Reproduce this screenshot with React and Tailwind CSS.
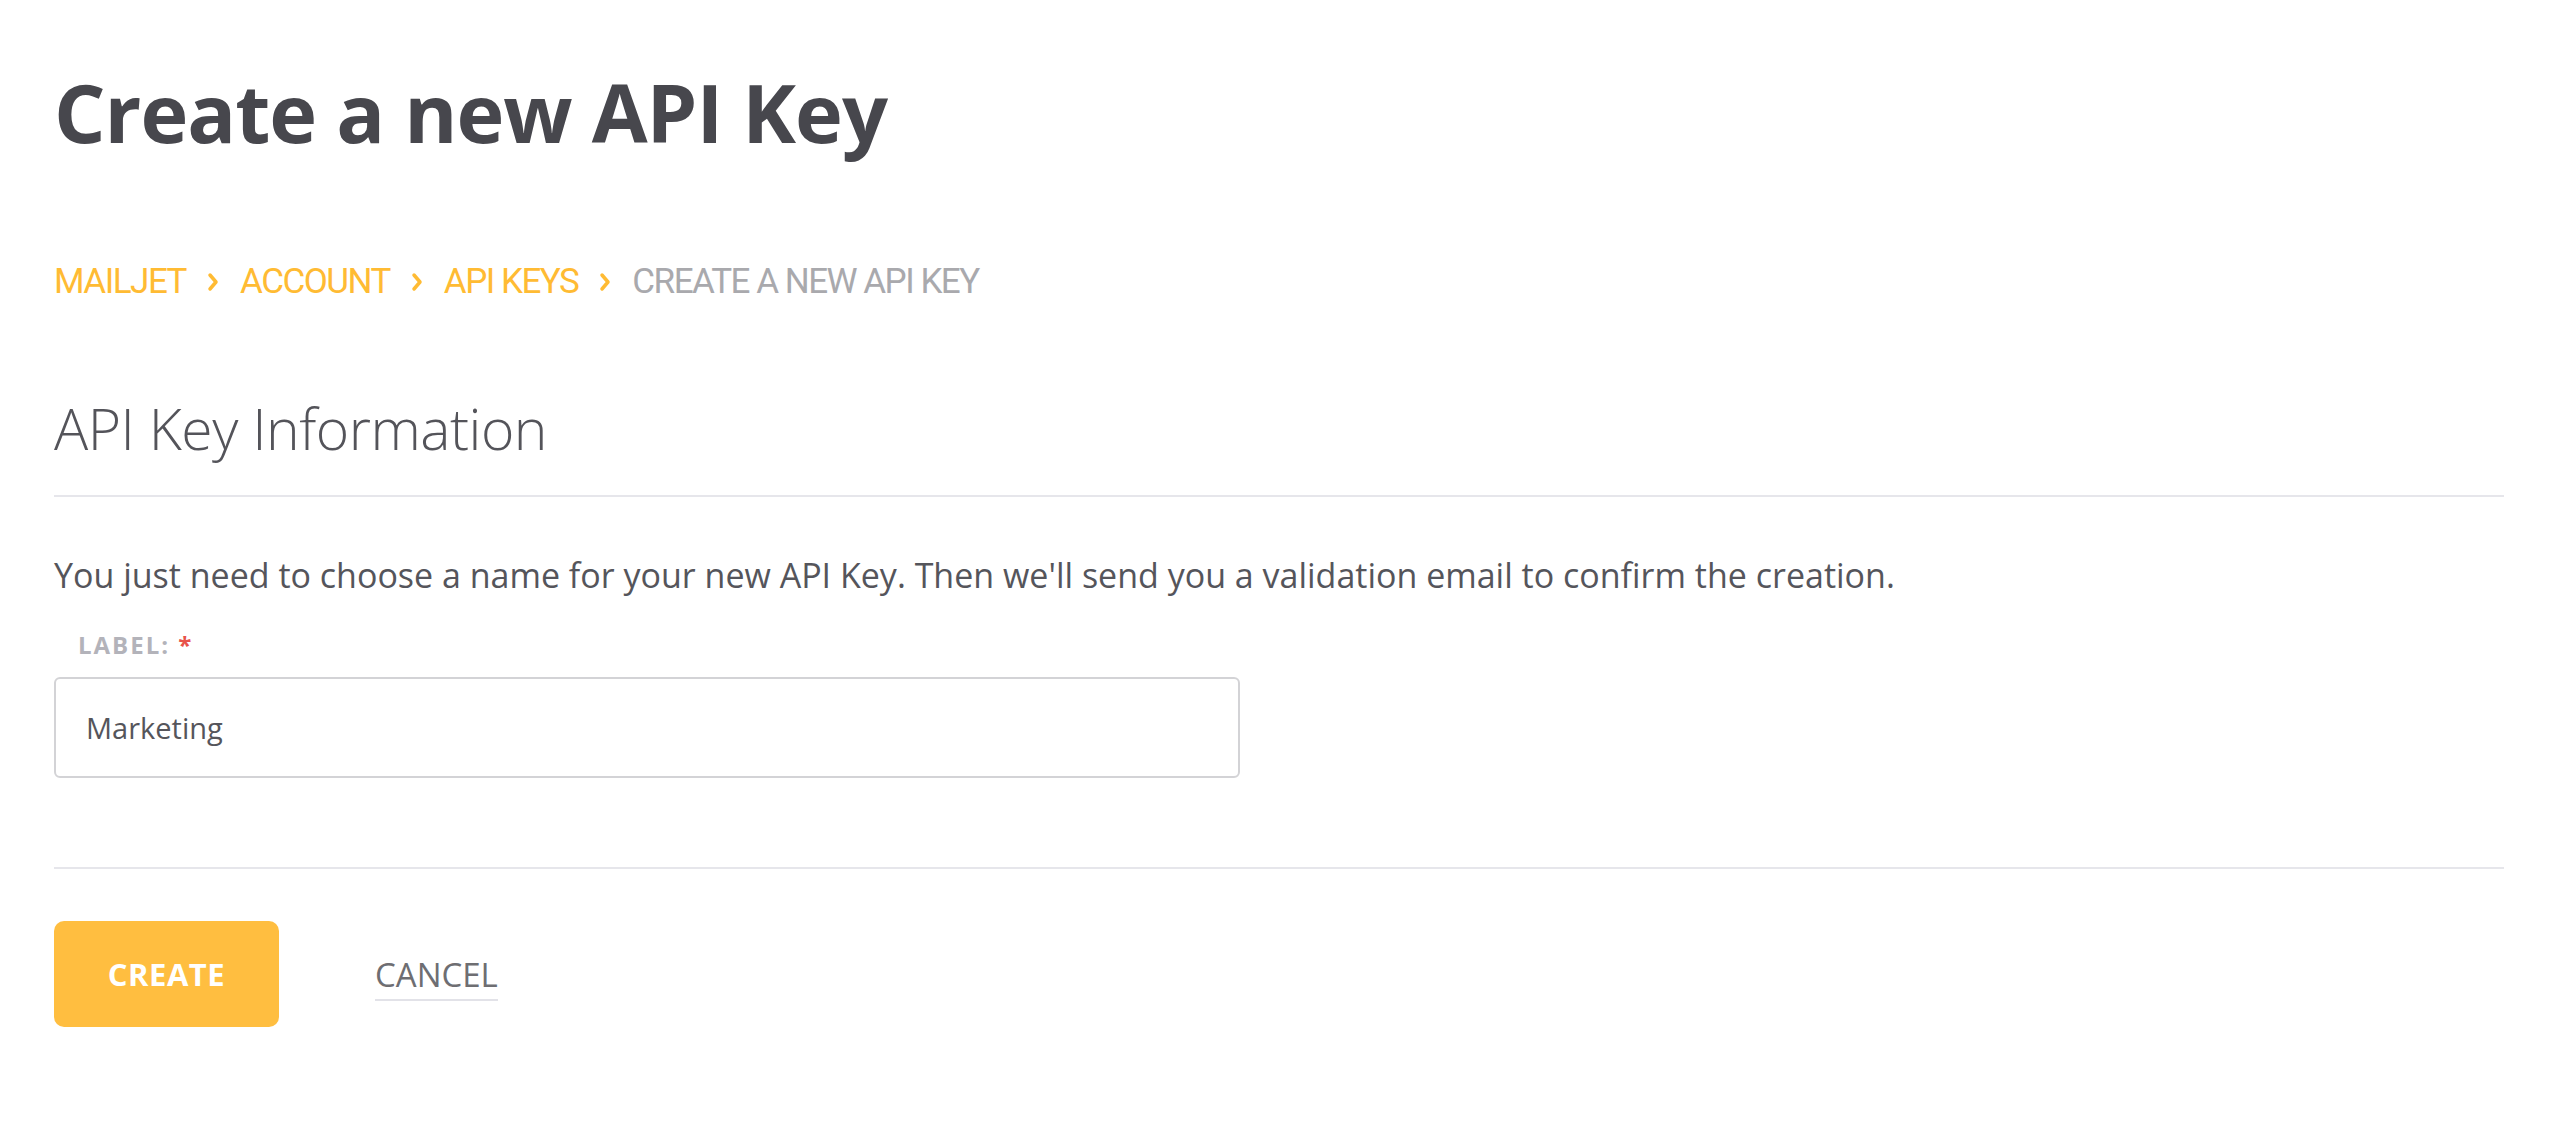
import React from 'react';

const crumbs = ['MAILJET', 'ACCOUNT', 'API KEYS'];

const Chevron = () => (
  <svg width="12" height="22" viewBox="0 0 12 22" className="mx-[21px]">
    <path d="M3 4 L9 11 L3 18" fill="none" stroke="#ffbb33" strokeWidth="3.5" strokeLinecap="round" strokeLinejoin="round" />
  </svg>
);

export default function App() {
  return (
    <div className="min-h-screen bg-white px-[54px] font-['Open_Sans',sans-serif]">
      <h1 className="pt-[52px] text-[81px] leading-[120px] font-bold tracking-[-1px] text-[#47474d]">
        Create a new API Key
      </h1>

      <nav className="mt-[88px] flex items-center font-['Roboto',sans-serif] text-[35px] leading-[44px] tracking-[-1.5px]">
        {crumbs.map((c) => (
          <React.Fragment key={c}>
            <a href="#" className="text-[#ffbb33]">{c}</a>
            <Chevron />
          </React.Fragment>
        ))}
        <span className="text-[#a9a9ad]">CREATE A NEW API KEY</span>
      </nav>

      <h2 className="mt-[89px] text-[57px] leading-[70px] font-light tracking-[-0.5px] text-[#54545a]">
        API Key Information
      </h2>
      <div className="mt-[32px] border-t-2 border-[#e6e6eb]" />

      <p className="mt-[56px] text-[34px] leading-[44px] text-[#55555b]">
        You just need to choose a name for your new API Key. Then we'll send you a validation email to confirm the creation.
      </p>

      <label className="mt-[33px] block pl-[24px] text-[24px] leading-[30px] font-bold tracking-[2px] text-[#b3b3ba]">
        LABEL: <span className="text-[#e8534a]">*</span>
      </label>
      <input
        defaultValue="Marketing"
        className="mt-[17px] block h-[101px] w-[1186px] rounded-[6px] border-2 border-[#d3d3d6] px-[30px] text-[29px] text-[#55555b] outline-none"
      />

      <div className="mt-[89px] border-t-2 border-[#e6e6eb]" />

      <div className="mt-[52px] flex items-center gap-[96px]">
        <button className="h-[106px] w-[225px] rounded-[10px] bg-[#ffbe40] text-[31px] font-bold tracking-[0.5px] text-white">
          CREATE
        </button>
        <button className="mt-[8px] border-b-2 border-[#e2e2e8] pb-[4px] text-[33px] leading-[40px] text-[#6e6e72]">
          CANCEL
        </button>
      </div>
    </div>
  );
}
